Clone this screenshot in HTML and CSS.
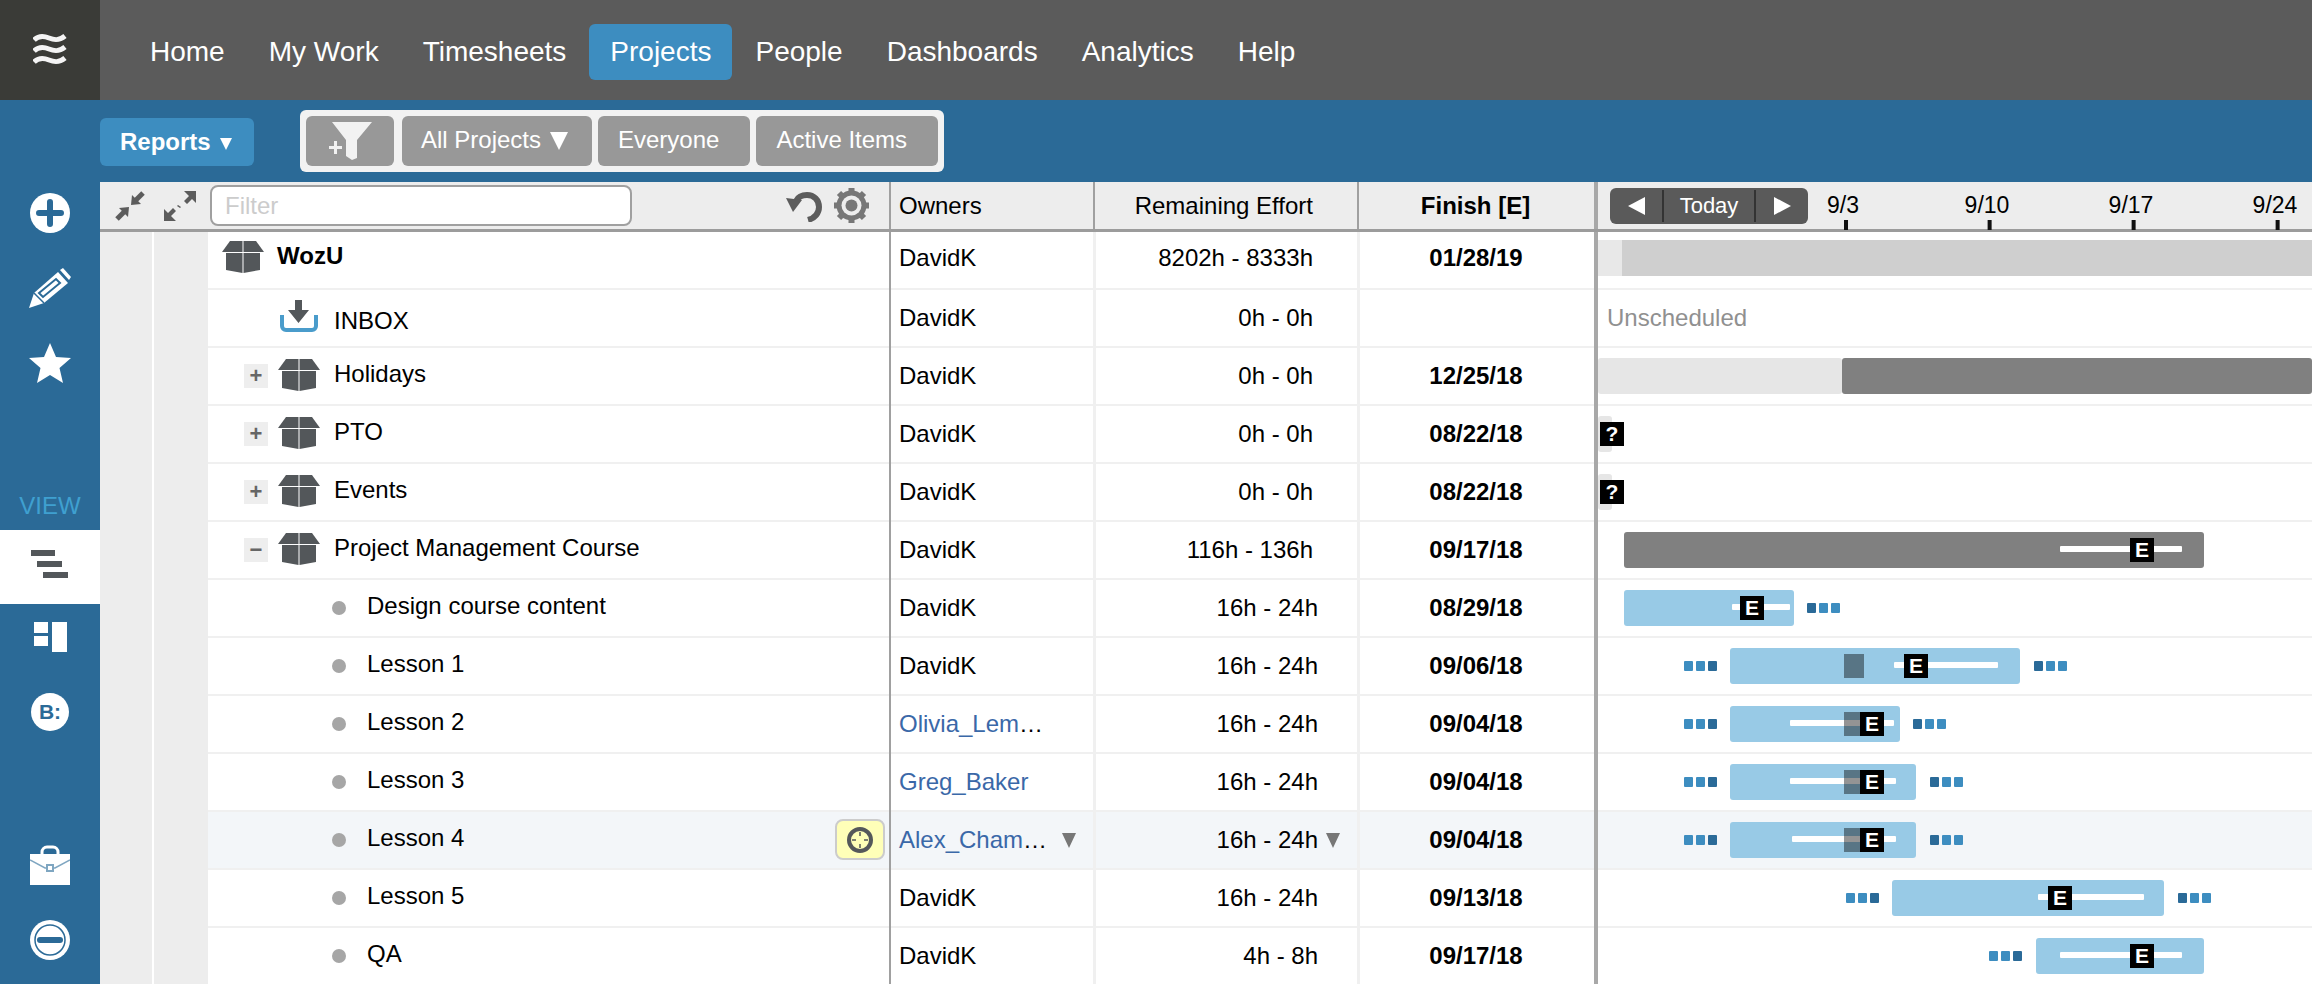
FILE: index.html
```html
<!DOCTYPE html>
<html lang="en">
<head>
    <meta charset="UTF-8">
    <title>Projects</title>
    <link rel="stylesheet" href="styles.css">
</head>
<body>
    <!-- Shared icons -->
    <svg class="defs" width="0" height="0">
        <symbol id="box" viewBox="0 0 42 32">
            <path d="M8 0h12.500v11H0z"/>
            <path d="M21.500 0H34l8 11H21.500z"/>
            <path d="M4 12h16.500v20L4 29z"/>
            <path d="M21.500 12H38v17l-16.500 3z"/>
        </symbol>
        <symbol id="dots-before" viewBox="0 0 33 10">
            <rect x="0" y="0" width="9" height="10" rx="1"/>
            <rect x="12" y="0" width="9" height="10" rx="1"/>
            <rect x="24" y="0" width="9" height="10" rx="1" fill="#2a6a98"/>
        </symbol>
        <symbol id="dots-after" viewBox="0 0 33 10">
            <rect x="0" y="0" width="9" height="10" rx="1" fill="#2a6a98"/>
            <rect x="12" y="0" width="9" height="10" rx="1"/>
            <rect x="24" y="0" width="9" height="10" rx="1"/>
        </symbol>
    </svg>

    <!-- Top navigation -->
    <header class="topnav">
        <div class="logo">
            <svg width="34" height="34" viewBox="0 0 34 34" fill="none" stroke="#f4f4f4" stroke-width="5">
                <path d="M1 7c5-5 10-4 15-2s10 3 16-2"/>
                <path d="M1 18c5-5 10-4 15-2s10 3 16-2"/>
                <path d="M1 29c5-5 10-4 15-2s10 3 16-2"/>
            </svg>
        </div>
        <nav class="nav-links">
            <a href="#">Home</a>
            <a href="#">My Work</a>
            <a href="#">Timesheets</a>
            <a href="#" class="active">Projects</a>
            <a href="#">People</a>
            <a href="#">Dashboards</a>
            <a href="#">Analytics</a>
            <a href="#">Help</a>
        </nav>
    </header>

    <div class="workspace">
        <!-- Left icon bar -->
        <aside class="sidebar">
            <svg class="side-icon plus-icon" viewBox="0 0 40 40">
                <circle cx="20" cy="20" r="20" fill="#fff"/>
                <path d="M20 9v22M9 20h22" stroke="#2b6a97" stroke-width="6" stroke-linecap="round"/>
            </svg>
            <svg class="side-icon pencil-icon" viewBox="0 0 42 40" fill="#fff">
                <path d="M0 40l5-15L29 4l10 11-24 20z"/>
                <path d="M31 2l3-2 8 9-2 3z"/>
                <path d="M10 25l17-14 4 4-17 14z" fill="none" stroke="#2b6a97" stroke-width="2"/>
                <path d="M5 25l10 10" stroke="#2b6a97" stroke-width="1.5"/>
            </svg>
            <svg class="side-icon star-icon" viewBox="0 0 42 40">
                <path d="M21 0l6 14 15 1-11.500 10L34 40l-13-8-13 8 3.500-15L0 15l15-1z" fill="#fff"/>
            </svg>
            <div class="view-label">VIEW</div>
            <div class="view-active">
                <svg width="38" height="28" viewBox="0 0 38 28" fill="#53575a">
                    <rect x="0" y="0" width="24" height="6"/>
                    <rect x="6" y="11" width="25" height="6"/>
                    <rect x="12" y="22" width="25" height="6"/>
                </svg>
            </div>
            <svg class="side-icon board-icon" viewBox="0 0 33 30" fill="#fff">
                <rect x="0" y="0" width="14" height="11"/>
                <rect x="0" y="14" width="14" height="10"/>
                <rect x="18" y="0" width="15" height="30"/>
            </svg>
            <div class="b-icon">B:</div>
            <svg class="side-icon case-icon" viewBox="0 0 40 40">
                <path d="M12 9V7a5 5 0 015-5h6a5 5 0 015 5v2" fill="none" stroke="#fff" stroke-width="3"/>
                <path d="M0 9h40v31H0z" fill="#fff"/>
                <path d="M0 15l15 8h10l15-8" fill="none" stroke="#7fa6c1" stroke-width="1.500"/>
                <rect x="17" y="20" width="6" height="6" fill="#fff" stroke="#7fa6c1" stroke-width="2"/>
            </svg>
            <svg class="side-icon minus-icon" viewBox="0 0 40 40">
                <circle cx="20" cy="20" r="20" fill="#fff"/>
                <circle cx="20" cy="20" r="15" fill="none" stroke="#2b6a97" stroke-width="1.500"/>
                <path d="M10 20h20" stroke="#2b6a97" stroke-width="6" stroke-linecap="round"/>
            </svg>
        </aside>

        <main class="content">
            <!-- Filter toolbar -->
            <div class="toolbar">
                <button class="reports-btn">Reports<i class="reports-arrow"></i></button>
                <div class="filter-group">
                    <button class="filter-btn funnel-btn">
                        <svg width="44" height="38" viewBox="0 0 44 38" fill="#f2f2f2">
                            <path d="M4 0h40L29 18v18l-5 2-6-4V18z"/>
                            <path d="M6 19h3v5h5v3H9v5H6v-5H1v-3h5z"/>
                        </svg>
                    </button>
                    <button class="filter-btn all-btn">All Projects<i class="all-arrow"></i></button>
                    <button class="filter-btn">Everyone</button>
                    <button class="filter-btn">Active Items</button>
                </div>
            </div>

            <!-- Table header -->
            <div class="table-head">
                <div class="head-tree">
                    <svg class="head-icon" width="30" height="30" viewBox="0 0 30 30" fill="#5c5c5c" stroke="#5c5c5c">
                        <path d="M28 2l-8 8" stroke-width="5"/>
                        <path d="M16 14l1-10 9 9z" stroke="none"/>
                        <path d="M2 28l8-8" stroke-width="5"/>
                        <path d="M14 16l-1 10-9-9z" stroke="none"/>
                    </svg>
                    <svg class="head-icon expand-icon" width="32" height="30" viewBox="0 0 32 30" fill="#5c5c5c">
                        <path d="M20 0h12v12l-4-4-5 5-3-3 5-5z"/>
                        <path d="M12 30H0V18l4 4 5-5 3 3-5 5z"/>
                        <path d="M14 14l3 2-1 1-3-2z"/>
                    </svg>
                    <input class="filter-input" type="text" placeholder="Filter">
                    <svg class="undo-icon" width="37" height="32" viewBox="0 0 37 32" fill="none">
                        <path d="M22 30c7-2 11-7 11-13 0-7-5-12-12-12-5 0-9 2-11 6" stroke="#5c5c5c" stroke-width="6"/>
                        <path d="M0 8l16 2-9 12z" fill="#5c5c5c"/>
                    </svg>
                    <svg class="gear-icon" width="37" height="37" viewBox="0 0 37 37">
                        <circle cx="18.500" cy="18.500" r="11" fill="none" stroke="#777" stroke-width="8"/>
                        <path d="M18.500 1v35M1 18.500h35M6 6l25 25M31 6L6 31" stroke="#777" stroke-width="6"/>
                        <circle cx="18.500" cy="18.500" r="10" fill="#ededed"/>
                        <circle cx="18.500" cy="18.500" r="6" fill="#777"/>
                    </svg>
                </div>
                <div class="head-cell owner-col">Owners</div>
                <div class="head-cell effort-col">Remaining Effort</div>
                <div class="head-cell finish-col">Finish [E]</div>
                <div class="head-gantt">
                    <div class="today-ctrl">
                        <span class="today-arrow"><i class="tri-left"></i></span>
                        <span class="today-label">Today</span>
                        <span class="today-arrow"><i class="tri-right"></i></span>
                    </div>
                    <span class="date-mark" style="left: 245px">9/3</span>
                    <span class="date-mark" style="left: 389px">9/10</span>
                    <span class="date-mark" style="left: 533px">9/17</span>
                    <span class="date-mark" style="left: 677px">9/24</span>
                </div>
            </div>

            <div class="table-body">
                <div class="gutter">
                    <div class="gutter-col first"></div>
                    <div class="gutter-col second"></div>
                </div>

                <div class="rows">
                    <!-- WozU -->
                    <div class="row first-row">
                        <div class="tree-cell level-0">
                            <svg class="box-icon"><use href="#box"/></svg>
                            <span class="tree-label bold">WozU</span>
                        </div>
                        <div class="cell owner-col">DavidK</div>
                        <div class="cell effort-col">8202h - 8333h</div>
                        <div class="cell finish-col">01/28/19</div>
                        <div class="gantt-cell">
                            <div class="bar bar-pale" style="left: 0; width: 24px; top: 8px"></div>
                            <div class="bar bar-silver" style="left: 24px; width: 690px; top: 8px"></div>
                        </div>
                    </div>

                    <!-- INBOX -->
                    <div class="row">
                        <div class="tree-cell level-1">
                            <svg class="inbox-icon" width="38" height="32" viewBox="0 0 38 32">
                                <path d="M2 15v11a4 4 0 004 4h26a4 4 0 004-4V15" fill="none" stroke="#4a9ccb" stroke-width="4"/>
                                <path d="M15 0h7v10h7L18.500 23 8 10h7z" fill="#53575a"/>
                            </svg>
                            <span class="tree-label inbox-label">INBOX</span>
                        </div>
                        <div class="cell owner-col">DavidK</div>
                        <div class="cell effort-col">0h - 0h</div>
                        <div class="cell finish-col"></div>
                        <div class="gantt-cell"><span class="unscheduled">Unscheduled</span></div>
                    </div>

                    <!-- Holidays -->
                    <div class="row">
                        <div class="tree-cell level-1">
                            <span class="toggle">+</span>
                            <svg class="box-icon"><use href="#box"/></svg>
                            <span class="tree-label">Holidays</span>
                        </div>
                        <div class="cell owner-col">DavidK</div>
                        <div class="cell effort-col">0h - 0h</div>
                        <div class="cell finish-col">12/25/18</div>
                        <div class="gantt-cell">
                            <div class="bar bar-light" style="left: 0; width: 244px"></div>
                            <div class="bar bar-gray" style="left: 244px; width: 470px"></div>
                        </div>
                    </div>

                    <!-- PTO -->
                    <div class="row">
                        <div class="tree-cell level-1">
                            <span class="toggle">+</span>
                            <svg class="box-icon"><use href="#box"/></svg>
                            <span class="tree-label">PTO</span>
                        </div>
                        <div class="cell owner-col">DavidK</div>
                        <div class="cell effort-col">0h - 0h</div>
                        <div class="cell finish-col">08/22/18</div>
                        <div class="gantt-cell">
                            <div class="bar bar-light" style="left: 0; width: 14px"></div>
                            <span class="marker" style="left: 2px">?</span>
                        </div>
                    </div>

                    <!-- Events -->
                    <div class="row">
                        <div class="tree-cell level-1">
                            <span class="toggle">+</span>
                            <svg class="box-icon"><use href="#box"/></svg>
                            <span class="tree-label">Events</span>
                        </div>
                        <div class="cell owner-col">DavidK</div>
                        <div class="cell effort-col">0h - 0h</div>
                        <div class="cell finish-col">08/22/18</div>
                        <div class="gantt-cell">
                            <div class="bar bar-light" style="left: 0; width: 14px"></div>
                            <span class="marker" style="left: 2px">?</span>
                        </div>
                    </div>

                    <!-- Project Management Course -->
                    <div class="row">
                        <div class="tree-cell level-1">
                            <span class="toggle">−</span>
                            <svg class="box-icon"><use href="#box"/></svg>
                            <span class="tree-label">Project Management Course</span>
                        </div>
                        <div class="cell owner-col">DavidK</div>
                        <div class="cell effort-col">116h - 136h</div>
                        <div class="cell finish-col">09/17/18</div>
                        <div class="gantt-cell">
                            <div class="bar bar-gray" style="left: 26px; width: 580px"></div>
                            <div class="effort-line" style="left: 462px; width: 122px"></div>
                            <span class="marker" style="left: 532px">E</span>
                        </div>
                    </div>

                    <!-- Design course content -->
                    <div class="row leaf">
                        <div class="tree-cell level-2">
                            <span class="task-dot"></span>
                            <span class="tree-label">Design course content</span>
                        </div>
                        <div class="cell owner-col">DavidK</div>
                        <div class="cell effort-col">16h - 24h</div>
                        <div class="cell finish-col">08/29/18</div>
                        <div class="gantt-cell">
                            <div class="bar bar-blue" style="left: 26px; width: 170px"></div>
                            <div class="effort-line" style="left: 134px; width: 58px"></div>
                            <span class="marker" style="left: 142px">E</span>
                            <svg class="dots" style="left: 209px"><use href="#dots-after"/></svg>
                        </div>
                    </div>

                    <!-- Lesson 1 -->
                    <div class="row leaf">
                        <div class="tree-cell level-2">
                            <span class="task-dot"></span>
                            <span class="tree-label">Lesson 1</span>
                        </div>
                        <div class="cell owner-col">DavidK</div>
                        <div class="cell effort-col">16h - 24h</div>
                        <div class="cell finish-col">09/06/18</div>
                        <div class="gantt-cell">
                            <svg class="dots" style="left: 86px"><use href="#dots-before"/></svg>
                            <div class="bar bar-blue" style="left: 132px; width: 290px"></div>
                            <div class="effort-line" style="left: 296px; width: 104px"></div>
                            <div class="today-block" style="left: 246px"></div>
                            <span class="marker" style="left: 306px">E</span>
                            <svg class="dots" style="left: 436px"><use href="#dots-after"/></svg>
                        </div>
                    </div>

                    <!-- Lesson 2 -->
                    <div class="row leaf">
                        <div class="tree-cell level-2">
                            <span class="task-dot"></span>
                            <span class="tree-label">Lesson 2</span>
                        </div>
                        <div class="cell owner-col"><span><a href="#" class="owner-link">Olivia_Lem</a>…</span></div>
                        <div class="cell effort-col">16h - 24h</div>
                        <div class="cell finish-col">09/04/18</div>
                        <div class="gantt-cell">
                            <svg class="dots" style="left: 86px"><use href="#dots-before"/></svg>
                            <div class="bar bar-blue" style="left: 132px; width: 170px"></div>
                            <div class="effort-line" style="left: 192px; width: 104px"></div>
                            <div class="today-block" style="left: 246px"></div>
                            <span class="marker" style="left: 262px">E</span>
                            <svg class="dots" style="left: 315px"><use href="#dots-after"/></svg>
                        </div>
                    </div>

                    <!-- Lesson 3 -->
                    <div class="row leaf">
                        <div class="tree-cell level-2">
                            <span class="task-dot"></span>
                            <span class="tree-label">Lesson 3</span>
                        </div>
                        <div class="cell owner-col"><a href="#" class="owner-link">Greg_Baker</a></div>
                        <div class="cell effort-col">16h - 24h</div>
                        <div class="cell finish-col">09/04/18</div>
                        <div class="gantt-cell">
                            <svg class="dots" style="left: 86px"><use href="#dots-before"/></svg>
                            <div class="bar bar-blue" style="left: 132px; width: 186px"></div>
                            <div class="effort-line" style="left: 192px; width: 106px"></div>
                            <div class="today-block" style="left: 246px"></div>
                            <span class="marker" style="left: 262px">E</span>
                            <svg class="dots" style="left: 332px"><use href="#dots-after"/></svg>
                        </div>
                    </div>

                    <!-- Lesson 4, hovered row -->
                    <div class="row leaf hovered">
                        <div class="tree-cell level-2">
                            <span class="task-dot"></span>
                            <span class="tree-label">Lesson 4</span>
                            <span class="target-btn">
                                <svg width="28" height="28" viewBox="0 0 28 28" fill="none">
                                    <circle cx="14" cy="14" r="11" stroke="#55585a" stroke-width="4"/>
                                    <path d="M14 6v4M14 18v4M6 14h4M18 14h4" stroke="#55585a" stroke-width="1.500"/>
                                </svg>
                            </span>
                        </div>
                        <div class="cell owner-col">
                            <span><a href="#" class="owner-link">Alex_Cham</a>…</span>
                            <i class="tri-down owner-arrow"></i>
                        </div>
                        <div class="cell effort-col effort-hover">16h - 24h<i class="tri-down effort-arrow"></i></div>
                        <div class="cell finish-col">09/04/18</div>
                        <div class="gantt-cell">
                            <svg class="dots" style="left: 86px"><use href="#dots-before"/></svg>
                            <div class="bar bar-blue" style="left: 132px; width: 186px"></div>
                            <div class="effort-line" style="left: 194px; width: 104px"></div>
                            <div class="today-block" style="left: 246px"></div>
                            <span class="marker" style="left: 262px">E</span>
                            <svg class="dots" style="left: 332px"><use href="#dots-after"/></svg>
                        </div>
                    </div>

                    <!-- Lesson 5 -->
                    <div class="row leaf">
                        <div class="tree-cell level-2">
                            <span class="task-dot"></span>
                            <span class="tree-label">Lesson 5</span>
                        </div>
                        <div class="cell owner-col">DavidK</div>
                        <div class="cell effort-col">16h - 24h</div>
                        <div class="cell finish-col">09/13/18</div>
                        <div class="gantt-cell">
                            <svg class="dots" style="left: 248px"><use href="#dots-before"/></svg>
                            <div class="bar bar-blue" style="left: 294px; width: 272px"></div>
                            <div class="effort-line" style="left: 440px; width: 106px"></div>
                            <span class="marker" style="left: 450px">E</span>
                            <svg class="dots" style="left: 580px"><use href="#dots-after"/></svg>
                        </div>
                    </div>

                    <!-- QA -->
                    <div class="row leaf">
                        <div class="tree-cell level-2">
                            <span class="task-dot"></span>
                            <span class="tree-label">QA</span>
                        </div>
                        <div class="cell owner-col">DavidK</div>
                        <div class="cell effort-col">4h - 8h</div>
                        <div class="cell finish-col">09/17/18</div>
                        <div class="gantt-cell">
                            <svg class="dots" style="left: 391px"><use href="#dots-before"/></svg>
                            <div class="bar bar-blue" style="left: 438px; width: 168px"></div>
                            <div class="effort-line" style="left: 462px; width: 122px"></div>
                            <span class="marker" style="left: 532px">E</span>
                        </div>
                    </div>
                </div>
            </div>
        </main>
    </div>
</body>
</html>
```

FILE: styles.css
```css
/* General page */
body {
    margin: 0;
    height: 984px;
    overflow: hidden;
    font-family: "Liberation Sans", Arial, sans-serif;
    font-size: 24px;
    color: #000;
    background: #fff;
}

button {
    font-family: inherit;
    border: none;
    color: #fff;
    padding: 0;
}

.defs {
    position: absolute;
}

/* Top navigation */
.topnav {
    display: flex;
    height: 100px;
    background: #5b5b5b;
}

.logo {
    display: flex;
    justify-content: center;
    align-items: center;
    width: 100px;
    background: #3a3b37;
}

.nav-links {
    display: flex;
    align-items: center;
    gap: 2px;
    padding: 4px 0 0 29px;
}

.nav-links a {
    display: flex;
    align-items: center;
    height: 56px;
    padding: 0 21px;
    border-radius: 6px;
    color: #fff;
    font-size: 28px;
    text-decoration: none;
}

.nav-links a.active {
    background: #3d8dc0;
}

/* Everything below the navigation */
.workspace {
    display: flex;
    height: 884px;
    background: #2b6a97;
}

/* Left icon bar */
.sidebar {
    display: flex;
    flex-direction: column;
    align-items: center;
    width: 100px;
    flex-shrink: 0;
}

.side-icon {
    display: block;
    flex-shrink: 0;
}

.plus-icon {
    width: 40px;
    height: 40px;
    margin-top: 93px;
}

.pencil-icon {
    width: 42px;
    height: 40px;
    margin-top: 35px;
}

.star-icon {
    width: 42px;
    height: 40px;
    margin-top: 35px;
}

.view-label {
    margin-top: 102px;
    height: 45px;
    line-height: 42px;
    font-size: 24px;
    color: #3fa0d0;
}

.view-active {
    display: flex;
    justify-content: center;
    align-items: flex-start;
    width: 100%;
    height: 74px;
    padding-top: 20px;
    box-sizing: border-box;
    background: #fff;
}

.board-icon {
    width: 33px;
    height: 30px;
    margin-top: 18px;
}

.b-icon {
    width: 38px;
    height: 38px;
    margin-top: 41px;
    border-radius: 50%;
    background: #fff;
    color: #2b6a97;
    font-size: 21px;
    font-weight: bold;
    line-height: 38px;
    text-align: center;
}

.case-icon {
    width: 40px;
    height: 40px;
    margin-top: 114px;
}

.minus-icon {
    width: 40px;
    height: 40px;
    margin-top: 35px;
}

/* Main column */
.content {
    flex: 1;
    min-width: 0;
}

/* Filter toolbar */
.toolbar {
    display: flex;
    align-items: center;
    height: 82px;
}

.reports-btn {
    display: flex;
    align-items: center;
    width: 154px;
    height: 48px;
    margin-top: 1px;
    padding-left: 20px;
    box-sizing: border-box;
    border-radius: 6px;
    background: #3d8dc0;
    font-size: 24px;
    font-weight: bold;
}

.reports-arrow {
    display: block;
    width: 0;
    height: 0;
    margin: 4px 0 0 9px;
    border-left: 6px solid transparent;
    border-right: 6px solid transparent;
    border-top: 12px solid #fff;
}

.filter-group {
    display: flex;
    gap: 6px;
    margin-left: 46px;
    padding: 6px;
    border-radius: 6px;
    background: #f2f2f2;
}

.filter-btn {
    height: 50px;
    padding: 0 31px 2px 20px;
    box-sizing: border-box;
    border-radius: 6px;
    background: #989898;
    font-size: 24px;
}

.funnel-btn {
    display: flex;
    justify-content: center;
    align-items: center;
    width: 88px;
    margin-right: 2px;
    padding: 0;
}

.all-btn {
    display: flex;
    align-items: center;
    width: 190px;
    padding-left: 19px;
    padding-right: 0;
}

.all-arrow {
    display: block;
    width: 0;
    height: 0;
    margin: 2px 0 0 9px;
    border-left: 9px solid transparent;
    border-right: 9px solid transparent;
    border-top: 18px solid #fff;
}

/* Table header */
.table-head {
    display: flex;
    height: 50px;
    box-sizing: border-box;
    border-bottom: 3px solid #9c9c9c;
    background: #ededed;
}

.head-tree {
    display: flex;
    align-items: center;
    width: 789px;
    flex-shrink: 0;
    padding-left: 15px;
    box-sizing: border-box;
}

.head-icon {
    flex-shrink: 0;
}

.expand-icon {
    margin-left: 19px;
}

.filter-input {
    width: 422px;
    height: 41px;
    margin-left: 14px;
    padding: 0 0 0 13px;
    box-sizing: border-box;
    border: 2px solid #a0a0a0;
    border-radius: 8px;
    font-family: inherit;
    font-size: 24px;
}

.filter-input::placeholder {
    color: #ccc;
}

.undo-icon {
    margin-left: 154px;
}

.gear-icon {
    margin-left: 10px;
}

.head-cell {
    display: flex;
    align-items: center;
    box-sizing: border-box;
}

.head-gantt {
    position: relative;
    flex: 1;
    box-sizing: border-box;
    border-left: 4px solid #a8a8a8;
    padding: 6px 0 0 12px;
}

.today-ctrl {
    display: flex;
    align-items: center;
    width: 198px;
    height: 36px;
    border-radius: 6px;
    background: #5a5a5a;
    color: #fff;
}

.today-arrow {
    display: flex;
    justify-content: center;
    align-items: center;
    width: 52px;
    height: 100%;
}

.today-label {
    display: flex;
    justify-content: center;
    align-items: center;
    width: 94px;
    height: 32px;
    font-size: 22px;
    border-left: 2px solid #333;
    border-right: 2px solid #333;
    box-sizing: border-box;
}

.tri-left,
.tri-right {
    display: block;
    width: 0;
    height: 0;
    border-top: 9px solid transparent;
    border-bottom: 9px solid transparent;
}

.tri-left {
    border-right: 17px solid #fff;
}

.tri-right {
    border-left: 17px solid #fff;
}

/* Dates sit on the time axis with a tick below them */
.date-mark {
    position: absolute;
    top: 10px;
    font-size: 23px;
    transform: translateX(-50%);
}

.date-mark::after {
    content: "";
    position: absolute;
    top: 28px;
    left: calc(50% + 1px);
    width: 4px;
    height: 10px;
    background: #111;
}

/* Table body */
.table-body {
    display: flex;
    background: #fff;
}

.gutter {
    display: flex;
    gap: 2px;
    width: 108px;
    flex-shrink: 0;
    height: 752px;
}

.gutter-col {
    background: #ededed;
}

.gutter-col.first {
    width: 52px;
}

.gutter-col.second {
    width: 54px;
}

.rows {
    flex: 1;
    min-width: 0;
}

.row {
    display: flex;
    height: 58px;
    box-shadow: inset 0 -2px 0 #f0f0f0;
}

.row.hovered {
    background: #f3f6f9;
}

.first-row .cell {
    padding-bottom: 6px;
}

/* Tree column */
.tree-cell {
    position: relative;
    display: flex;
    align-items: center;
    width: 681px;
    flex-shrink: 0;
    padding-bottom: 2px;
    box-sizing: border-box;
}

.level-0 {
    padding-left: 14px;
}

.level-1 {
    padding-left: 36px;
}

.level-2 {
    padding-left: 124px;
}

.tree-label {
    margin-bottom: 4px;
}

.tree-label.bold {
    margin-left: 13px;
    margin-bottom: 8px;
    font-weight: bold;
}

.inbox-label {
    margin-left: 16px;
    margin-top: 6px;
    margin-bottom: 0;
}

.box-icon {
    width: 42px;
    height: 32px;
    fill: #53575a;
    flex-shrink: 0;
    margin-bottom: 2px;
}

.level-1 .box-icon {
    margin-left: 10px;
    margin-right: 14px;
}

.level-0 .box-icon {
    margin-bottom: 6px;
}

.inbox-icon {
    margin-left: 36px;
    flex-shrink: 0;
    margin-bottom: 4px;
}

.toggle {
    width: 24px;
    height: 24px;
    flex-shrink: 0;
    background: #eee;
    color: #666;
    font-size: 22px;
    font-weight: bold;
    line-height: 23px;
    text-align: center;
}

.task-dot {
    width: 14px;
    height: 14px;
    margin-right: 21px;
    flex-shrink: 0;
    border-radius: 50%;
    background: #a6a6a6;
}

.target-btn {
    position: absolute;
    right: 4px;
    top: 7px;
    display: flex;
    justify-content: center;
    align-items: center;
    width: 50px;
    height: 41px;
    box-sizing: border-box;
    border: 2px solid #ccc;
    border-radius: 8px;
    background: #ffffb8;
}

/* Data columns */
.cell {
    display: flex;
    align-items: center;
    padding-bottom: 2px;
    box-sizing: border-box;
}

.owner-col {
    justify-content: flex-start;
    width: 204px;
    flex-shrink: 0;
    padding-left: 8px;
    border-left: 2px solid #a0a0a0;
}

.effort-col {
    justify-content: flex-end;
    width: 264px;
    flex-shrink: 0;
    padding-right: 44px;
    border-left: 3px solid #f0f0f0;
}

.leaf .effort-col {
    padding-right: 39px;
}

.finish-col {
    justify-content: center;
    width: 237px;
    flex-shrink: 0;
    padding-right: 2px;
    border-left: 3px solid #f0f0f0;
    font-weight: bold;
}

.head-cell.effort-col,
.head-cell.finish-col {
    border-left: 2px solid #a0a0a0;
}

.owner-link {
    color: #3a68a8;
    text-decoration: none;
}

.tri-down {
    display: block;
    width: 0;
    height: 0;
    border-left: 7.500px solid transparent;
    border-right: 7.500px solid transparent;
    border-top: 15px solid #777;
}

.owner-arrow {
    margin-left: 15px;
}

.effort-hover {
    position: relative;
}

.effort-arrow {
    position: absolute;
    right: 17px;
    top: 21px;
}

.gantt-cell {
    position: relative;
    flex: 1;
    box-sizing: border-box;
    border-left: 4px solid #a8a8a8;
    overflow: hidden;
}

.bar {
    position: absolute;
    top: 10px;
    height: 36px;
    border-radius: 3px;
}

.bar-pale {
    background: #e8e8e8;
    border-radius: 0;
}

.bar-silver {
    background: #cfcfcf;
    border-radius: 0;
}

.bar-light {
    background: #e6e6e6;
}

.bar-gray {
    background: #808080;
}

.bar-blue {
    background: #98cae6;
}

.effort-line {
    position: absolute;
    top: 24px;
    height: 6px;
    border-radius: 1px;
    background: #fff;
}

.today-block {
    position: absolute;
    top: 16px;
    width: 20px;
    height: 24px;
    background: rgba(0, 0, 0, 0.42);
}

.marker {
    position: absolute;
    top: 16px;
    width: 24px;
    height: 24px;
    background: #000;
    color: #fff;
    font-size: 21px;
    font-weight: bold;
    line-height: 24px;
    text-align: center;
}

.dots {
    position: absolute;
    top: 23px;
    width: 33px;
    height: 10px;
    fill: #3d8dc0;
}

.unscheduled {
    position: absolute;
    left: 9px;
    top: 14px;
    color: #909090;
}
```
